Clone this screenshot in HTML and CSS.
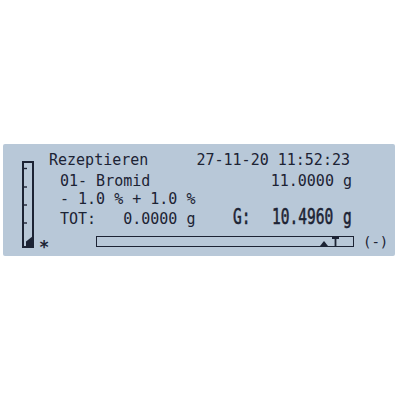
FILE: index.html
```html
<!DOCTYPE html>
<html>
<head>
<meta charset="utf-8">
<link rel="stylesheet" href="styles.css">
</head>
<body>
<div class="panel">
  <svg class="gauge" width="12" height="87" viewBox="0 0 12 87">
    <rect x="1" y="1" width="10" height="85" fill="none" stroke="#1c2334" stroke-width="2"/>
    <g stroke="#1c2334" stroke-width="1.4">
      <line x1="1" y1="7.5" x2="5" y2="7.5"/>
      <line x1="1" y1="26" x2="5" y2="26"/>
      <line x1="1" y1="44" x2="5" y2="44"/>
      <line x1="1" y1="62" x2="5" y2="62"/>
    </g>
    <polygon points="11,75 4,80.5 4,85 11,85" fill="#1c2334"/>
  </svg>
  <div class="content">
    <div class="row row1">
      <span>Rezeptieren</span>
      <span class="date">27-11-20 11:52:23</span>
    </div>
    <div class="row row2">
      <span>01- Bromid</span>
      <span>11.0000 g</span>
    </div>
    <div class="row row3">
      <span>- 1.0 % + 1.0 %</span>
    </div>
    <div class="row row4">
      <span class="tot">TOT:   0.0000 g</span>
      <span class="big big-label"><span class="squeeze">G:</span></span>
      <span class="big big-value"><span class="squeeze">10.4960</span></span>
      <span class="big big-unit"><span class="squeeze">g</span></span>
    </div>
    <div class="row row5">
      <span class="star">*</span>
      <div class="bar">
        <svg class="mark-tri" width="8" height="5" viewBox="0 0 8 5"><polygon points="4,0 8,5 0,5" fill="#1c2334"/></svg>
        <svg class="mark-t" width="7" height="10" viewBox="0 0 7 10"><rect x="0" y="0" width="7" height="2" fill="#1c2334"/><rect x="2.6" y="0" width="1.8" height="10" fill="#1c2334"/></svg>
      </div>
      <span class="sign">(-)</span>
    </div>
  </div>
</div>
</body>
</html>
```

FILE: styles.css
```css
html, body {
  margin: 0;
  padding: 0;
  background: #ffffff;
}

.panel {
  box-sizing: border-box;
  margin: 144px 0 0 3px;
  width: 392px;
  height: 112px;
  background: #b8c8d8;
  border-radius: 2px;
  display: flex;
  padding-left: 19px;
  color: #1c2334;
  font-family: "DejaVu Sans Mono", monospace;
  font-size: 15px;
}

.gauge {
  margin-top: 17px;
  flex: none;
}

.content {
  margin-left: 4px;
  width: 314px;
  flex: none;
  display: flex;
  flex-direction: column;
}

.row {
  display: flex;
  line-height: 16px;
  white-space: pre;
}

.row > * {
  flex: none;
}

.row1 {
  margin-top: 8px;
  height: 21px;
  padding-left: 11px;
  justify-content: space-between;
}

.date {
  padding-right: 2px;
}

.row2 {
  height: 17.5px;
  padding-left: 22px;
  justify-content: space-between;
}

.row3 {
  height: 19.5px;
  padding-left: 22px;
}

.row4 {
  height: 19px;
  padding-left: 22px;
  align-items: baseline;
}

.big {
  display: inline-block;
  font-size: 22px;
  line-height: 14px;
}

.squeeze {
  display: inline-block;
  transform: scaleX(0.66);
  transform-origin: 0 0;
  -webkit-text-stroke: 0.6px #1c2334;
}

.big-label {
  margin-left: auto;
  width: 17px;
  margin-right: 22px;
}

.big-value {
  width: 61px;
}

.big-unit {
  width: 9px;
  margin-left: 10px;
}

.row5 {
  margin-top: 7px;
  align-items: flex-start;
}

.star {
  margin-left: 1px;
  width: 10px;
  font-size: 17px;
  line-height: 15px;
  margin-top: 4px;
  font-weight: bold;
}

.bar {
  position: relative;
  box-sizing: border-box;
  margin-left: 47px;
  width: 258px;
  height: 11px;
  border: 1px solid #1c2334;
}

.mark-tri {
  position: absolute;
  left: 223px;
  bottom: 0;
}

.mark-t {
  position: absolute;
  left: 235px;
  top: 0;
}

.sign {
  margin-left: 9px;
  margin-top: 0;
  font-size: 14px;
  line-height: 12px;
}
```
